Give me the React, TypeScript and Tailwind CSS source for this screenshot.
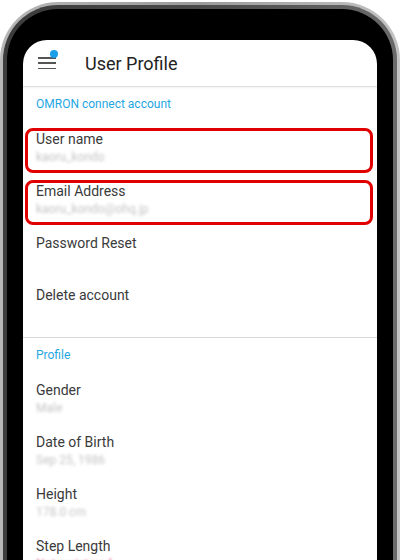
import React from 'react';

type Row = {
  label: string;
  value?: string;
  pink?: boolean;
  marked?: boolean;
};

const accountRows: Row[] = [
  { label: 'User name', value: 'kaoru_kondo', marked: true },
  { label: 'Email Address', value: 'kaoru_kondo@ohq.jp', marked: true },
  { label: 'Password Reset' },
  { label: 'Delete account' },
];

const profileRows: Row[] = [
  { label: 'Gender', value: 'Male' },
  { label: 'Date of Birth', value: 'Sep 25, 1986' },
  { label: 'Height', value: '178.0 cm' },
  { label: 'Step Length', value: 'Not registered', pink: true },
];

function SectionTitle({ children }: { children: React.ReactNode }) {
  return (
    <div className="h-[33px] flex items-center px-[13px] text-[12px] text-[#1fa6e3]">
      {children}
    </div>
  );
}

function SettingRow({ row }: { row: Row }) {
  return (
    <div className="relative h-[52px] px-[13px] pt-[9px]">
      <p className="text-[14px] leading-[20px] text-[#3a3a3a]">{row.label}</p>
      {row.value && (
        <p
          className={
            row.pink
              ? 'text-[12px] leading-[16px] text-[#e4688a] blur-[1px]'
              : 'text-[12px] leading-[16px] text-[#c4c4c4] blur-[1.4px]'
          }
        >
          {row.value}
        </p>
      )}
      {row.marked && (
        <div className="absolute left-[2px] right-[4px] top-[8px] bottom-[-1px] border-[3px] border-[#e00000] rounded-[8px]" />
      )}
    </div>
  );
}

export default function App() {
  return (
    <div
      className="w-[400px] h-[560px] overflow-hidden bg-white"
      style={{ fontFamily: 'Roboto, "Liberation Sans", sans-serif' }}
    >
      {/* phone bezel */}
      <div className="mt-[2px] h-[600px] rounded-t-[58px] bg-gradient-to-r from-[#b8b8b8] via-[#9a9a9a] to-[#c4c4c4] px-[3px] pt-[3px]">
        <div className="h-full rounded-t-[55px] bg-gradient-to-r from-[#3c3c3c] via-[#4a4a4a] to-[#6a6a6a] px-[4px] pt-[4px]">
          <div className="h-full rounded-t-[51px] bg-black px-[16px] pt-[31px]">
            <div className="h-full rounded-t-[24px] bg-white overflow-hidden">
              {/* top bar */}
              <div className="h-[47px] flex items-center border-b border-[#e2e2e2] shadow-[0_1px_2px_rgba(0,0,0,0.06)]">
                <div className="relative ml-[15px] w-[18px] h-[12px] flex flex-col justify-between">
                  <span className="block h-[1.5px] bg-[#555]" />
                  <span className="block h-[1.5px] bg-[#555]" />
                  <span className="block h-[1.5px] bg-[#555]" />
                  <span className="absolute right-[-2px] top-[-7px] w-[8px] h-[8px] rounded-full bg-[#1a9ee9]" />
                </div>
                <h1 className="ml-[29px] text-[18px] font-normal text-[#222]">User Profile</h1>
              </div>

              <SectionTitle>OMRON connect account</SectionTitle>
              <div className="pb-[9px]">
                {accountRows.map((r) => (
                  <SettingRow key={r.label} row={r} />
                ))}
              </div>

              <div className="border-t border-[#d9d9d9]" />

              <SectionTitle>Profile</SectionTitle>
              <div>
                {profileRows.map((r) => (
                  <SettingRow key={r.label} row={r} />
                ))}
              </div>
            </div>
          </div>
        </div>
      </div>
    </div>
  );
}
